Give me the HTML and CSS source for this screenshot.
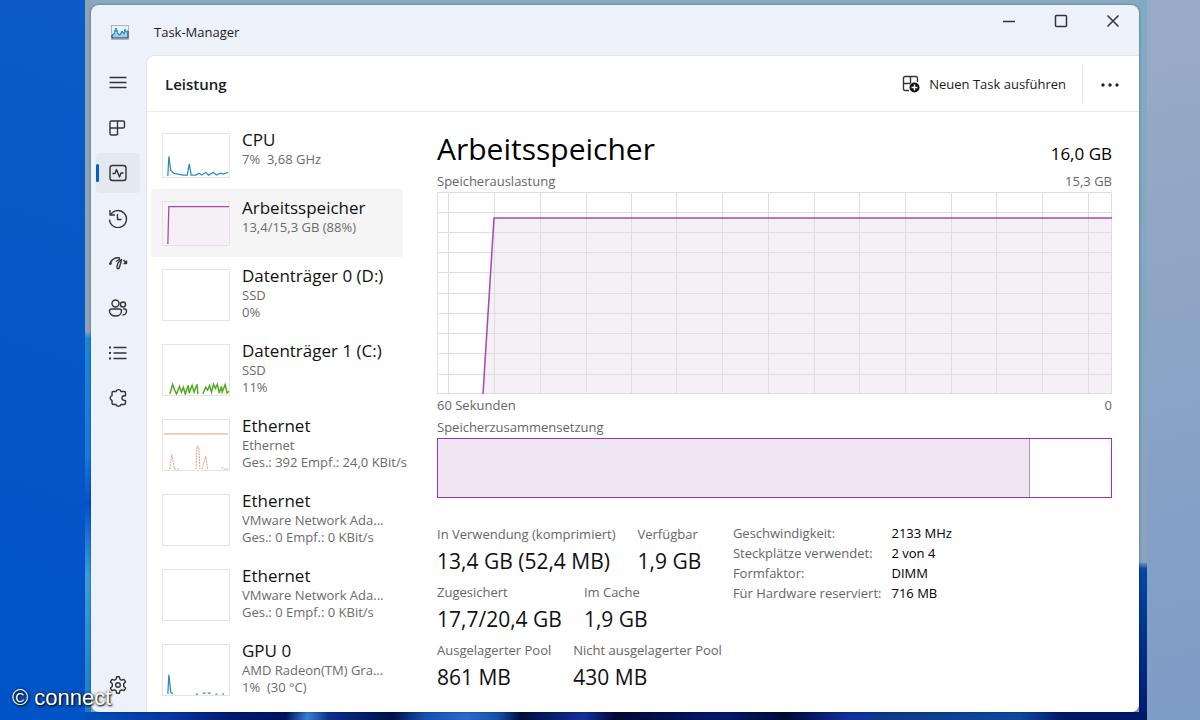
FILE: index.html
```html
<!DOCTYPE html>
<html lang="de">
<head>
    <meta charset="UTF-8">
    <meta name="viewport" content="width=device-width, initial-scale=1.0">
    <title>Task-Manager</title>
    <link rel="stylesheet" href="styles.css">
</head>
<body>
    <div class="desktop">
        <div class="wallpaper">
            <div class="window">
                <header class="titlebar">
                    <svg class="app-icon" width="18" height="15" viewBox="0 0 18 15">
                        <rect x="0.5" y="0.5" width="17" height="14" fill="#e2f2fb" stroke="#a9b6c0"/>
                        <path d="M1 10l2-1 2-6 2 6 2 1 2-4 2 3 1-5 1 3 2-1v7H1z" fill="#8fd0f4"/>
                        <path d="M1 10l2-1 2-6 2 6 2 1 2-4 2 3 1-5 1 3 2-1" fill="none" stroke="#3a9ee0"/>
                    </svg>
                    <h1>Task-Manager</h1>
                    <div class="window-buttons">
                        <button aria-label="Minimieren"><svg width="14" height="14" viewBox="0 0 14 14"><path d="M1 7.5h12"/></svg></button>
                        <button aria-label="Maximieren"><svg width="14" height="14" viewBox="0 0 14 14"><rect x="1.5" y="1.5" width="11" height="11" rx="1"/></svg></button>
                        <button aria-label="Schließen"><svg width="14" height="14" viewBox="0 0 14 14"><path d="M1.5 1.5l11 11M12.5 1.5l-11 11"/></svg></button>
                    </div>
                </header>

                <div class="main">
                    <nav class="sidebar">
                        <button aria-label="Navigation öffnen"><svg width="20" height="20" viewBox="0 0 20 20"><path d="M1.5 4.5h17M1.5 9.5h17M1.5 14.5h17"/></svg></button>
                        <button aria-label="Prozesse"><svg width="20" height="20" viewBox="0 0 20 20"><path d="M3.5 3h11.500a1.500 1.500 0 0 1 1.500 1.500v4a1.500 1.500 0 0 1-1.500 1.500H2M9.500 3v14M2 15.500v-11A1.500 1.500 0 0 1 3.500 3M2 15.500A1.500 1.500 0 0 0 3.500 17h4.500a1.500 1.500 0 0 0 1.500-1.500"/></svg></button>
                        <button class="active" aria-label="Leistung"><svg width="20" height="20" viewBox="0 0 20 20"><rect x="2" y="2.5" width="16" height="15" rx="2.5"/><path d="M4.500 10.500h2.500l1.500-4 3 7.500 1.500-4h2.500"/></svg></button>
                        <button aria-label="App-Verlauf"><svg width="20" height="20" viewBox="0 0 20 20"><path d="M2 2v5h5M2.500 7a8.500 8.500 0 1 1-1 4.500M9.500 6v5.500h4"/></svg></button>
                        <button aria-label="Autostart von Apps"><svg width="20" height="20" viewBox="0 0 20 20"><path d="M1.500 11l1.500-2.500a9 9 0 0 1 9-3.500M15.500 7l3 3.500M3 8v3h-2M18.500 7.500v3h-3M13.500 6.500c-2 1.500-4.500 5-4.500 7.500s2 2.500 2.500 0 2-5 2-7.500zM8 8.500l4-2.500"/></svg></button>
                        <button aria-label="Benutzer"><svg width="20" height="20" viewBox="0 0 20 20"><circle cx="7.500" cy="5.500" r="3.500"/><circle cx="15" cy="6.500" r="2.500"/><path d="M3.500 11h8a2 2 0 0 1 2 2c0 3-2.500 5-6 5s-6-2-6-5a2 2 0 0 1 2-2zM15 11h1.500a2 2 0 0 1 2 2c0 2-1.500 4-4 4"/></svg></button>
                        <button aria-label="Details"><svg width="20" height="20" viewBox="0 0 20 20"><path d="M5.500 4.500h13M5.500 10h13M5.500 15.500h13"/><path class="dots" d="M1 4.500h2M1 10h2M1 15.500h2"/></svg></button>
                        <button aria-label="Dienste"><svg width="20" height="20" viewBox="0 0 20 20"><path d="M5.500 3.500h2.500a2.600 2.600 0 0 1 5 0h3a1.500 1.500 0 0 1 1.500 1.500v2.800h-1.200a2.300 2.300 0 0 0 0 4.600h1.200V15a1.500 1.500 0 0 1-1.500 1.500h-3a2.600 2.600 0 0 1-5 0H5.500A1.500 1.500 0 0 1 4 15v-2.500a2.500 2.500 0 0 1 0-4.800V5a1.500 1.500 0 0 1 1.500-1.500z"/></svg></button>
                        <button class="settings" aria-label="Einstellungen"><svg width="20" height="20" viewBox="0 0 20 20"><circle cx="10" cy="10" r="2.300"/><path d="M8.600 1.800h2.800l.6 2.500 1.600.9 2.400-.8 1.500 2.500-1.800 1.800v2.600l1.800 1.800-1.500 2.500-2.400-.8-1.600.9-.6 2.500H8.600L8 15.700l-1.600-.9-2.400.8-1.500-2.500 1.800-1.800V8.700L2.500 6.900 4 4.400l2.400.8L8 4.300z"/></svg></button>
                    </nav>

                    <div class="page">
                        <div class="toolbar">
                            <h2>Leistung</h2>
                            <button class="new-task">
                                <svg width="18" height="18" viewBox="0 0 18 18">
                                    <path d="M7 15.500H3A1.500 1.500 0 0 1 1.500 14V3A1.500 1.500 0 0 1 3 1.500h11A1.500 1.500 0 0 1 15.500 3v4M8.500 1.500v7M1.500 8.500h7"/>
                                    <circle class="badge" cx="12.5" cy="12.5" r="5"/>
                                    <path class="plus" d="M12.5 9.500v6M9.500 12.500h6"/>
                                </svg>
                                Neuen Task ausführen
                            </button>
                            <button class="more" aria-label="Mehr"><svg width="20" height="6" viewBox="0 0 20 6"><circle cx="3" cy="3" r="1.700"/><circle cx="10" cy="3" r="1.700"/><circle cx="17" cy="3" r="1.700"/></svg></button>
                        </div>

                        <div class="performance">
                            <div class="devices">
                                <button class="device">
                                    <svg class="thumb short" viewBox="0 0 68 46" preserveAspectRatio="none"><path class="cpu" d="M5 45l1-21 2 15 3 3 4 1 6 1h4l2-12 2 12h5l3-2 3 2 4-3 3 3 5-3 3 3 4-2 3 1 5-2"/></svg>
                                    <span class="device-text"><span class="name">CPU</span><span>7%&nbsp; 3,68 GHz</span></span>
                                </button>
                                <button class="device selected">
                                    <svg class="thumb short" viewBox="0 0 68 46" preserveAspectRatio="none"><path class="mem" d="M5 46L6 5H68V46z"/><path class="mem-line" d="M5 45L6 5H68"/></svg>
                                    <span class="device-text"><span class="name">Arbeitsspeicher</span><span>13,4/15,3 GB (88%)</span></span>
                                </button>
                                <button class="device">
                                    <svg class="thumb" viewBox="0 0 68 52"></svg>
                                    <span class="device-text"><span class="name">Datenträger 0 (D:)</span><span>SSD</span><span>0%</span></span>
                                </button>
                                <button class="device">
                                    <svg class="thumb" viewBox="0 0 68 52" preserveAspectRatio="none"><path class="disk" d="M7 51l3-10 2 6 2 4 3-8 2 6 2-5 2 7 3-9 1 8 3-8 2 7 3-8 1 10M41 51l3-7 2 3 2-5 2 7 2-8 2 4 2-4 2 9 2-7 1 6 3-8 2 9 2-2"/></svg>
                                    <span class="device-text"><span class="name">Datenträger 1 (C:)</span><span>SSD</span><span>11%</span></span>
                                </button>
                                <button class="device">
                                    <svg class="thumb" viewBox="0 0 68 52" preserveAspectRatio="none"><path class="net" d="M1 14.500h66"/><path class="net dashed" d="M7 51l2-15 3 15h4M34 51l1-24 2 1 1 23M40 51l4-13 2 13M60 49l3 2h4"/></svg>
                                    <span class="device-text"><span class="name">Ethernet</span><span>Ethernet</span><span>Ges.: 392 Empf.: 24,0 KBit/s</span></span>
                                </button>
                                <button class="device">
                                    <svg class="thumb" viewBox="0 0 68 52"></svg>
                                    <span class="device-text"><span class="name">Ethernet</span><span>VMware Network Ada...</span><span>Ges.: 0 Empf.: 0 KBit/s</span></span>
                                </button>
                                <button class="device">
                                    <svg class="thumb" viewBox="0 0 68 52"></svg>
                                    <span class="device-text"><span class="name">Ethernet</span><span>VMware Network Ada...</span><span>Ges.: 0 Empf.: 0 KBit/s</span></span>
                                </button>
                                <button class="device">
                                    <svg class="thumb" viewBox="0 0 68 52" preserveAspectRatio="none"><path class="cpu" d="M5 51l1-20 2 18 2 2M34 51h2M41 50h3M46 50h3M54 51h2M61 51h2"/></svg>
                                    <span class="device-text"><span class="name">GPU 0</span><span>AMD Radeon(TM) Gra...</span><span>1%&nbsp; (30 °C)</span></span>
                                </button>
                            </div>

                            <section class="detail">
                                <div class="detail-head">
                                    <h3>Arbeitsspeicher</h3>
                                    <span class="total">16,0 GB</span>
                                </div>
                                <div class="labels"><span>Speicherauslastung</span><span>15,3 GB</span></div>
                                <svg class="graph" viewBox="0 0 675 202" preserveAspectRatio="none">
                                    <path class="area" d="M46 202L57 26H675V202z"/>
                                    <path class="grid" d="M0.5 0V202M11.500 0V202M57.500 0V202M103.500 0V202M149.500 0V202M194.500 0V202M239.500 0V202M285.500 0V202M331.500 0V202M377.500 0V202M422.500 0V202M468.500 0V202M514.500 0V202M559.500 0V202M605.500 0V202M651.500 0V202M674.500 0V202"/>
                                    <path class="grid" d="M0 0.5H675M0 20.500H675M0 40.500H675M0 60.500H675M0 80.500H675M0 101.500H675M0 121.500H675M0 141.500H675M0 161.500H675M0 182.500H675M0 201.500H675"/>
                                    <path class="usage" d="M46 202L57 26H675"/>
                                </svg>
                                <div class="labels"><span>60 Sekunden</span><span>0</span></div>
                                <div class="labels">Speicherzusammensetzung</div>
                                <div class="composition"><div class="used"></div></div>

                                <div class="stats">
                                    <div class="stat-rows">
                                        <dl>
                                            <div><dt>In Verwendung (komprimiert)</dt><dd>13,4 GB (52,4 MB)</dd></div>
                                            <div><dt>Verfügbar</dt><dd>1,9 GB</dd></div>
                                        </dl>
                                        <dl>
                                            <div><dt>Zugesichert</dt><dd>17,7/20,4 GB</dd></div>
                                            <div><dt>Im Cache</dt><dd>1,9 GB</dd></div>
                                        </dl>
                                        <dl>
                                            <div><dt>Ausgelagerter Pool</dt><dd>861 MB</dd></div>
                                            <div><dt>Nicht ausgelagerter Pool</dt><dd>430 MB</dd></div>
                                        </dl>
                                    </div>
                                    <dl class="specs">
                                        <dt>Geschwindigkeit:</dt><dd>2133 MHz</dd>
                                        <dt>Steckplätze verwendet:</dt><dd>2 von 4</dd>
                                        <dt>Formfaktor:</dt><dd>DIMM</dd>
                                        <dt>Für Hardware reserviert:</dt><dd>716 MB</dd>
                                    </dl>
                                </div>
                            </section>
                        </div>
                    </div>
                </div>
            </div>
        </div>
        <div class="credit">© connect</div>
    </div>
</body>
</html>
```
FILE: styles.css
```css
* {
    box-sizing: border-box;
}

body {
    margin: 0;
    font-family: "Open Sans", "Noto Sans", sans-serif;
    font-size: 13px;
    color: #1b1b1b;
}

h1, h2, h3, dl, dd {
    margin: 0;
    font-weight: 400;
}

button {
    font: inherit;
    color: inherit;
    background: none;
    border: none;
    padding: 0;
    cursor: pointer;
}

svg {
    fill: none;
    stroke: #333;
    flex-shrink: 0;
}

/* Desktop */
.desktop {
    position: relative;
    min-height: 100vh;
    padding: 0 53px 0 85px;
    display: flex;
    background:
        linear-gradient(165deg, #9aabc6, #7d9cc6) right / 53px 100% no-repeat,
        linear-gradient(200deg, #1c66c8, #0a5ac8 40%, #0053c6);
}

.wallpaper {
    flex: 1;
    display: flex;
    padding: 5px 8px 8px 6px;
    background:
        linear-gradient(100deg, #0450b8, #0838a0 8%, #001a70 14%, #001460 19%, #3a80d0 21%, #0a3090 23%, #001048 29%, #1450b0 32%, #2a6cc8 36%, #1450a8 39%, #000c3c 41%, #14309a 47%, #000a36 50%, #06186c 60%, #000a36 66%, #1030a0 72%, #0c3c88 76%, #1048a0 88%, #001a68 92%) bottom / 100% 8px no-repeat,
        linear-gradient(#82aac4, #8aa4bd 78%, #0348a4 79%, #001a70) right / 8px 100% no-repeat,
        linear-gradient(#8aa5b8, #8ea2b8 46%, #1888d8 47%, #1a7ad8 63%, #0450d0 70%, #3a9edc 80%, #1c78d0) left / 6px 100% no-repeat,
        #88aac2;
}

/* Window */
.window {
    flex: 1;
    display: flex;
    flex-direction: column;
    background: #edf2fa;
    border-radius: 8px;
    overflow: hidden;
    box-shadow: 0 0 3px rgba(0, 0, 0, 0.4);
}

.titlebar {
    height: 50px;
    display: flex;
    align-items: center;
    padding: 4px 0 0 20px;
}

.titlebar h1 {
    flex: 1;
    margin-left: 25px;
    font-size: 13px;
}

.window-buttons {
    display: flex;
    align-self: flex-start;
}

.window-buttons button {
    width: 52px;
    height: 24px;
}

.window-buttons svg {
    display: block;
    margin: 0 auto;
    stroke-width: 1.5;
}

.main {
    flex: 1;
    display: flex;
}

/* Sidebar */
.sidebar {
    width: 55px;
    padding: 8px 6px 7px 5px;
    display: flex;
    flex-direction: column;
    gap: 5px;
}

.sidebar button {
    position: relative;
    height: 40px;
    display: flex;
    align-items: center;
    justify-content: center;
    border-radius: 4px;
}

.sidebar svg {
    stroke-width: 1.4;
    stroke-linejoin: round;
}

.sidebar .dots {
    stroke-width: 2;
}

.sidebar .active {
    background: #e4e9f0;
}

.sidebar .active::before {
    content: "";
    position: absolute;
    left: 0;
    top: 11px;
    width: 3px;
    height: 18px;
    border-radius: 2px;
    background: #0062c4;
}

.sidebar .settings {
    margin-top: auto;
}

/* Page */
.page {
    flex: 1;
    display: flex;
    flex-direction: column;
    background: #fff;
    border: 1px solid #e2e6ec;
    border-width: 1px 0 0 1px;
    border-radius: 8px 0 0 0;
}

.toolbar {
    height: 56px;
    display: flex;
    align-items: center;
    padding: 0 16px 0 18px;
    border-bottom: 1px solid #e9e9e9;
}

.toolbar h2 {
    flex: 1;
    font-size: 15px;
    font-weight: 600;
}

.new-task {
    display: flex;
    align-items: center;
    gap: 9px;
    padding-right: 16px;
    height: 38px;
    border-right: 1px solid #e5e5e5;
}

.new-task svg {
    stroke-width: 1.4;
}

.new-task .badge {
    fill: #111;
    stroke: none;
}

.new-task .plus {
    stroke: #fff;
}

.more {
    width: 54px;
    height: 38px;
    margin-right: -14px;
}

.more svg {
    fill: #222;
    stroke: none;
    vertical-align: middle;
}

.performance {
    flex: 1;
    display: flex;
}

/* Device list */
.devices {
    width: 256px;
    padding: 9px 0 0 4px;
}

.device {
    width: 100%;
    display: flex;
    gap: 12px;
    padding: 8px 0 11px 11px;
    text-align: left;
    white-space: nowrap;
}

.device.selected {
    background: #f5f5f5;
}

.thumb {
    width: 68px;
    height: 52px;
    margin-top: 4px;
    border: 1px solid #e4e4e4;
    background: #fff;
}

.thumb.short {
    height: 45px;
}

.selected .thumb {
    background: #f5f5f5;
}

.cpu {
    stroke: #2a8bc4;
    stroke-width: 1.3;
}

.mem {
    fill: #f4f0f5;
    stroke: none;
}

.mem-line {
    stroke: #a845b8;
    stroke-width: 1.3;
}

.disk {
    stroke: #4faa1c;
    stroke-width: 1.5;
}

.net {
    stroke: #e0996c;
}

.dashed {
    stroke-dasharray: 2 1;
}

.device-text {
    display: flex;
    flex-direction: column;
    width: 140px;
    line-height: 17px;
    color: #6b6b6b;
}

.device-text .name {
    font-size: 17px;
    line-height: 22px;
    color: #111;
}

/* Detail */
.detail {
    flex: 1;
    padding: 16px 27px 0 34px;
}

.detail-head {
    display: flex;
    justify-content: space-between;
    align-items: baseline;
    color: #000;
}

.detail-head h3 {
    font-size: 30px;
    line-height: 42px;
}

.total {
    font-size: 17px;
    line-height: 22px;
}

.labels {
    display: flex;
    justify-content: space-between;
    line-height: 22px;
    color: #666;
}

.graph {
    display: block;
    width: 100%;
    height: 202px;
}

.graph .area {
    fill: #f4f0f5;
    stroke: none;
}

.graph .grid {
    stroke: #dedede;
}

.graph .usage {
    stroke: #a845b8;
    stroke-width: 1.5;
}

.composition {
    height: 60px;
    border: 1px solid #a030b8;
}

.used {
    width: 88%;
    height: 100%;
    background: #f0e6f2;
    border-right: 1px solid #c08acc;
}

.stats {
    display: flex;
    gap: 11px;
    margin-top: 25px;
}

.stat-rows dl {
    display: flex;
    gap: 22px;
    height: 58px;
}

.stats dt {
    line-height: 22px;
    color: #666;
}

.stat-rows dd {
    font-size: 21px;
    line-height: 32px;
    color: #111;
}

.specs {
    display: grid;
    grid-template-columns: auto auto;
    align-content: start;
    column-gap: 10px;
}

.stats .specs dt, .specs dd {
    line-height: 20px;
}

.specs dd {
    color: #000;
}

/* Photo credit */
.credit {
    position: absolute;
    left: 12px;
    bottom: 9px;
    font-family: "Liberation Sans", sans-serif;
    font-size: 22px;
    color: #fff;
    text-shadow: 1px 1px 2px #000, 0 0 3px rgba(0, 0, 0, 0.6);
}
```
